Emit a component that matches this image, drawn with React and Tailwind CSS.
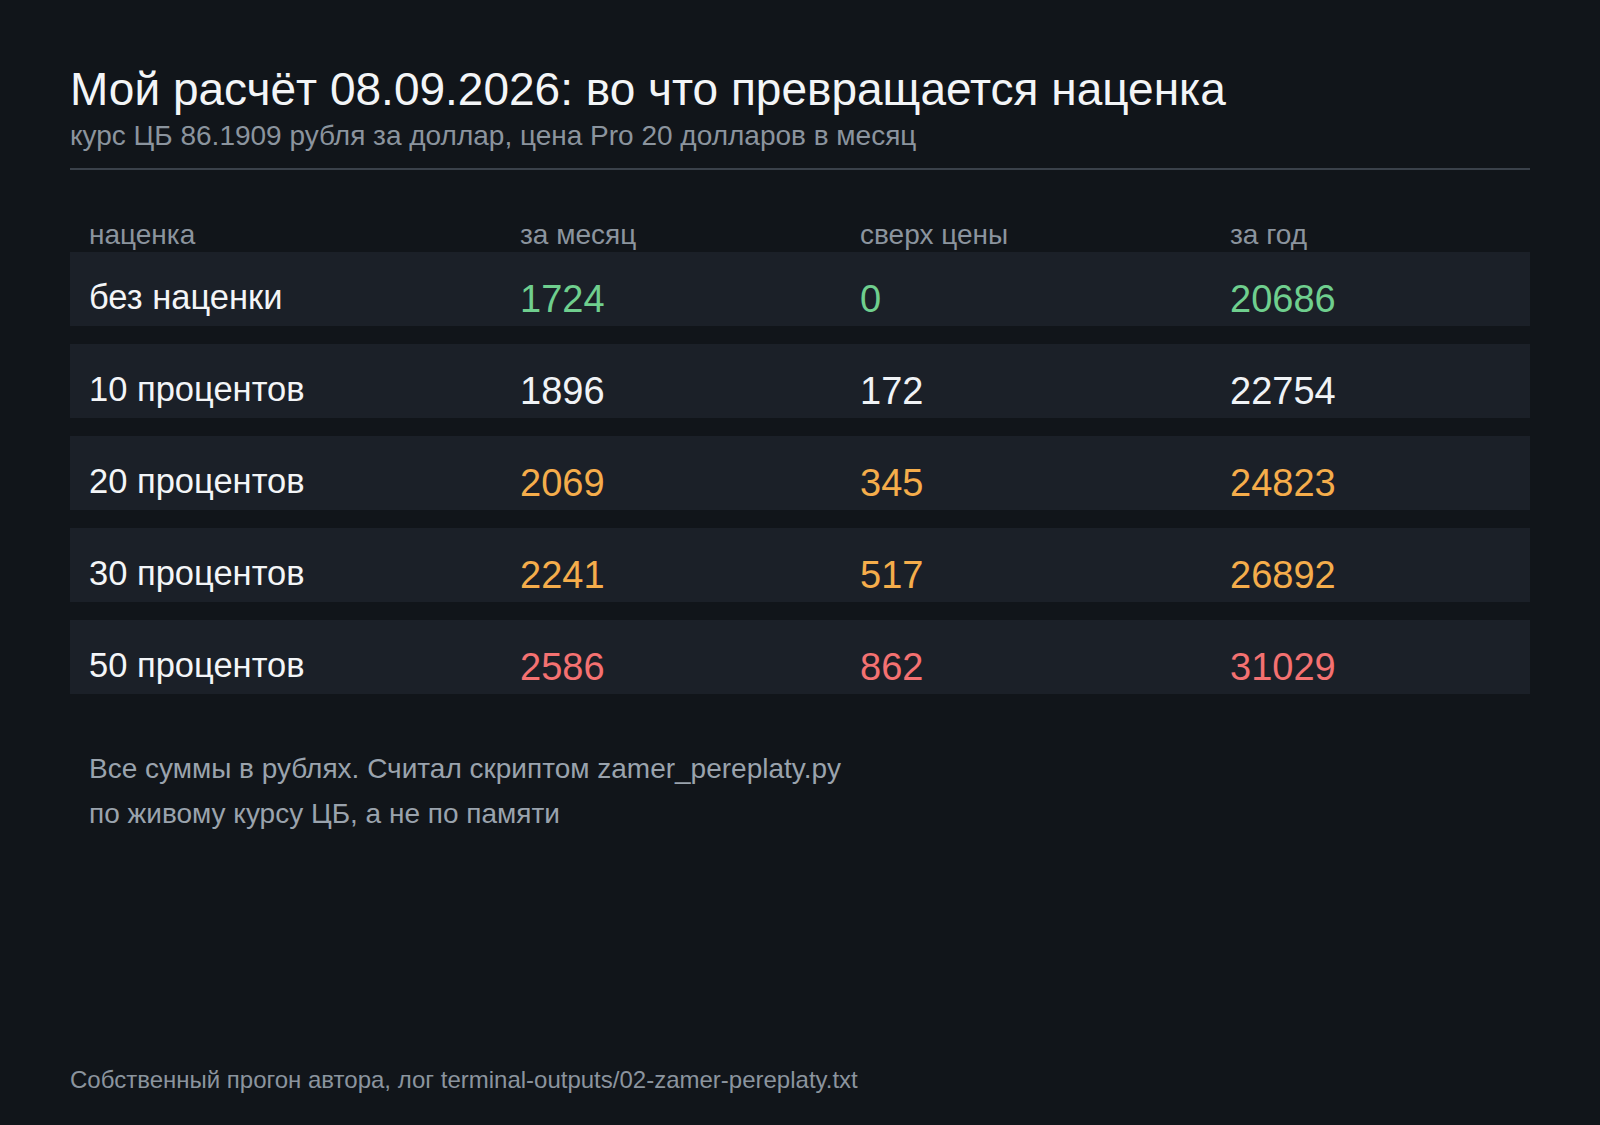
const rows = [
  { label: "без наценки", month: "1724", over: "0", year: "20686", tone: "text-[#6fcf8e]" },
  { label: "10 процентов", month: "1896", over: "172", year: "22754", tone: "text-[#f0f3f6]" },
  { label: "20 процентов", month: "2069", over: "345", year: "24823", tone: "text-[#f5ad4b]" },
  { label: "30 процентов", month: "2241", over: "517", year: "26892", tone: "text-[#f5ad4b]" },
  { label: "50 процентов", month: "2586", over: "862", year: "31029", tone: "text-[#f47171]" },
];

const cols = "grid grid-cols-[431px_340px_370px_1fr] px-[19px]";

export default function App() {
  return (
    <main className="flex h-[1125px] w-full flex-col bg-[#11151a] px-[70px] pt-[62px] pb-[30px] font-['Liberation_Sans',Arial,sans-serif]">
      <header className="border-b-2 border-[#3a414a] pb-[13px]">
        <h1 className="text-[46px] leading-[1.2] text-[#f3f5f7]">
          Мой расчёт 08.09.2026: во что превращается наценка
        </h1>
        <p className="mt-px text-[28px] leading-[1.3] text-[#8b949e]">
          курс ЦБ 86.1909 рубля за доллар, цена Pro 20 долларов в месяц
        </p>
      </header>

      <section className="mt-[48px]">
        <div className={`${cols} text-[28px] leading-[1.2] text-[#8b949e]`}>
          <span>наценка</span>
          <span>за месяц</span>
          <span>сверх цены</span>
          <span>за год</span>
        </div>

        <div className="mt-px flex flex-col gap-[18px]">
          {rows.map((row) => (
            <div key={row.label} className={`${cols} h-[74px] items-start bg-[#1b2028] pt-[28px] leading-none`}>
              <span className="text-[34.5px] text-[#f3f5f7]">{row.label}</span>
              <span className={`text-[38px] ${row.tone}`}>{row.month}</span>
              <span className={`text-[38px] ${row.tone}`}>{row.over}</span>
              <span className={`text-[38px] ${row.tone}`}>{row.year}</span>
            </div>
          ))}
        </div>
      </section>

      <p className="mt-[53px] pl-[19px] text-[28px] leading-[1.6] text-[#9aa3ad]">
        Все суммы в рублях. Считал скриптом zamer_pereplaty.py
        <br />
        по живому курсу ЦБ, а не по памяти
      </p>

      <footer className="mt-auto text-[24px] leading-[1.2] text-[#8b949e]">
        Собственный прогон автора, лог terminal-outputs/02-zamer-pereplaty.txt
      </footer>
    </main>
  );
}
